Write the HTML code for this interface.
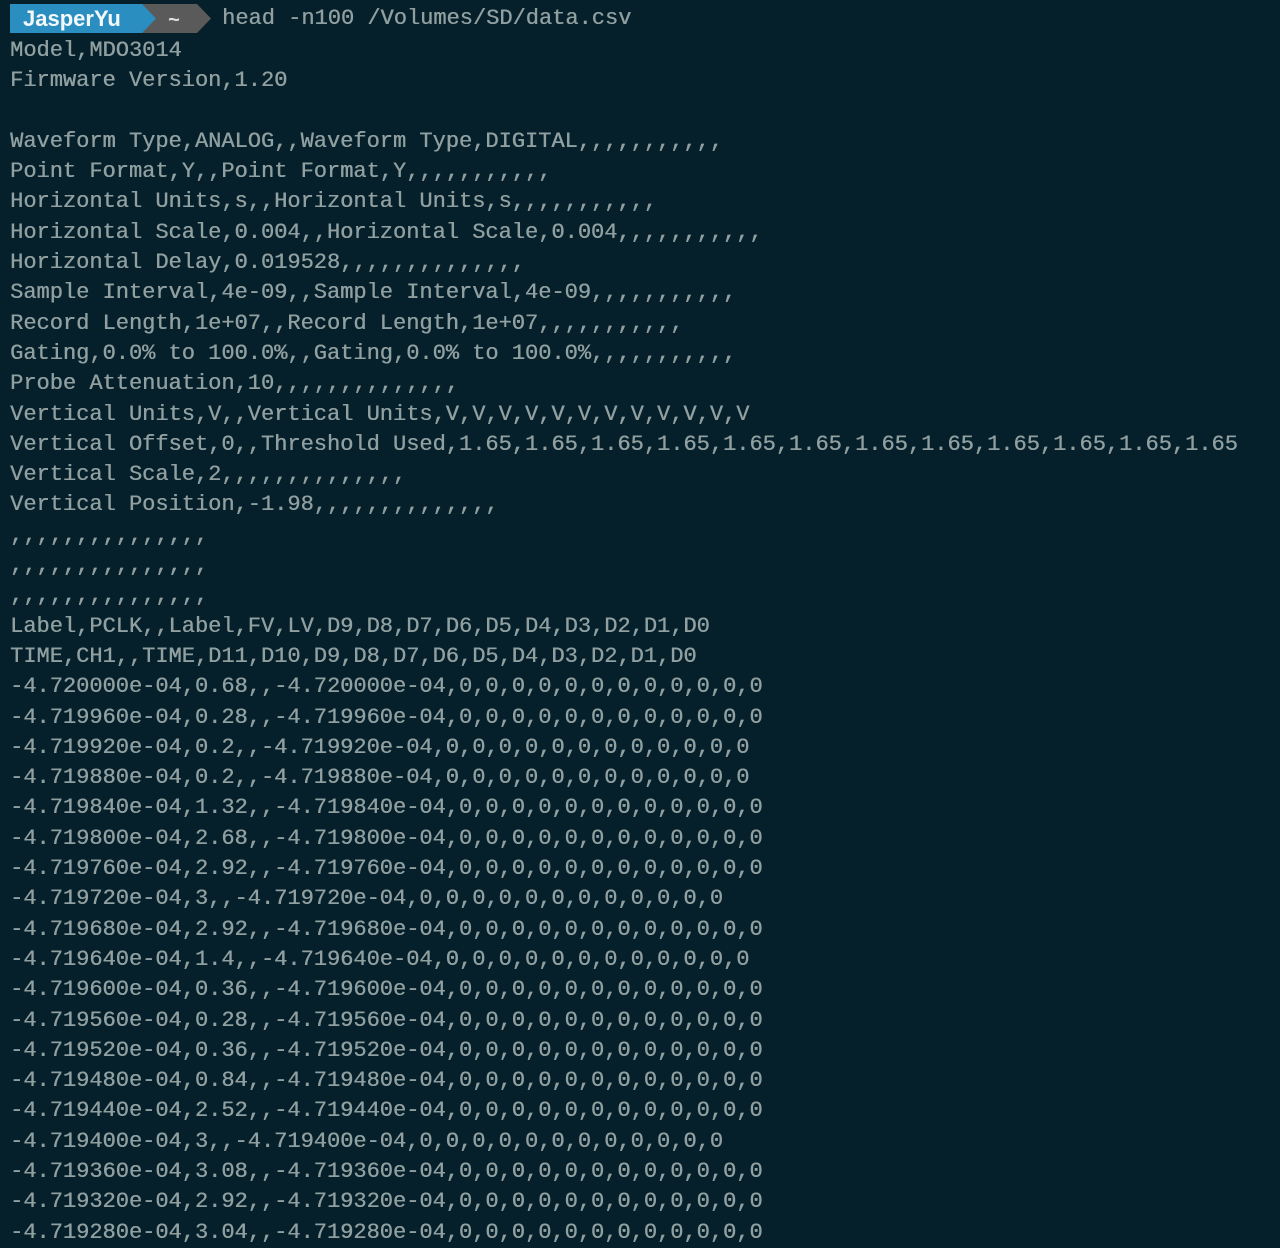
<!DOCTYPE html>
<html><head><style>
html,body{margin:0;padding:0;background:#05202a;width:1280px;height:1225px;overflow:hidden}
pre{margin:0;position:absolute;left:10px;top:36px;font-family:"Liberation Mono",monospace;font-size:22px;line-height:30.3px;color:#909fa0;text-shadow:0.4px 0 0 #909fa0}
</style></head><body>
<svg style="position:absolute;left:0;top:0" width="230" height="36">
<polygon points="142,4 197,4 211,18.5 197,33 142,33" fill="#5a5a5a"/>
<polygon points="10,4 142,4 156,18.5 142,33 10,33" fill="#2a8fc0"/>
<text x="23" y="26" font-family="Liberation Sans" font-weight="bold" font-size="22" fill="#f4f8fa">JasperYu</text>
<text x="168" y="26" font-family="Liberation Mono" font-weight="bold" font-size="20" fill="#ddd">~</text>
</svg>
<div style="position:absolute;left:222px;top:4px;font-family:'Liberation Mono',monospace;font-size:22px;line-height:30px;color:#909fa0;text-shadow:0.4px 0 0 #909fa0;white-space:pre">head -n100 /Volumes/SD/data.csv</div>
<pre>Model,MDO3014
Firmware Version,1.20

Waveform Type,ANALOG,,Waveform Type,DIGITAL,,,,,,,,,,,
Point Format,Y,,Point Format,Y,,,,,,,,,,,
Horizontal Units,s,,Horizontal Units,s,,,,,,,,,,,
Horizontal Scale,0.004,,Horizontal Scale,0.004,,,,,,,,,,,
Horizontal Delay,0.019528,,,,,,,,,,,,,,
Sample Interval,4e-09,,Sample Interval,4e-09,,,,,,,,,,,
Record Length,1e+07,,Record Length,1e+07,,,,,,,,,,,
Gating,0.0% to 100.0%,,Gating,0.0% to 100.0%,,,,,,,,,,,
Probe Attenuation,10,,,,,,,,,,,,,,
Vertical Units,V,,Vertical Units,V,V,V,V,V,V,V,V,V,V,V,V
Vertical Offset,0,,Threshold Used,1.65,1.65,1.65,1.65,1.65,1.65,1.65,1.65,1.65,1.65,1.65,1.65
Vertical Scale,2,,,,,,,,,,,,,,
Vertical Position,-1.98,,,,,,,,,,,,,,
,,,,,,,,,,,,,,,
,,,,,,,,,,,,,,,
,,,,,,,,,,,,,,,
Label,PCLK,,Label,FV,LV,D9,D8,D7,D6,D5,D4,D3,D2,D1,D0
TIME,CH1,,TIME,D11,D10,D9,D8,D7,D6,D5,D4,D3,D2,D1,D0
-4.720000e-04,0.68,,-4.720000e-04,0,0,0,0,0,0,0,0,0,0,0,0
-4.719960e-04,0.28,,-4.719960e-04,0,0,0,0,0,0,0,0,0,0,0,0
-4.719920e-04,0.2,,-4.719920e-04,0,0,0,0,0,0,0,0,0,0,0,0
-4.719880e-04,0.2,,-4.719880e-04,0,0,0,0,0,0,0,0,0,0,0,0
-4.719840e-04,1.32,,-4.719840e-04,0,0,0,0,0,0,0,0,0,0,0,0
-4.719800e-04,2.68,,-4.719800e-04,0,0,0,0,0,0,0,0,0,0,0,0
-4.719760e-04,2.92,,-4.719760e-04,0,0,0,0,0,0,0,0,0,0,0,0
-4.719720e-04,3,,-4.719720e-04,0,0,0,0,0,0,0,0,0,0,0,0
-4.719680e-04,2.92,,-4.719680e-04,0,0,0,0,0,0,0,0,0,0,0,0
-4.719640e-04,1.4,,-4.719640e-04,0,0,0,0,0,0,0,0,0,0,0,0
-4.719600e-04,0.36,,-4.719600e-04,0,0,0,0,0,0,0,0,0,0,0,0
-4.719560e-04,0.28,,-4.719560e-04,0,0,0,0,0,0,0,0,0,0,0,0
-4.719520e-04,0.36,,-4.719520e-04,0,0,0,0,0,0,0,0,0,0,0,0
-4.719480e-04,0.84,,-4.719480e-04,0,0,0,0,0,0,0,0,0,0,0,0
-4.719440e-04,2.52,,-4.719440e-04,0,0,0,0,0,0,0,0,0,0,0,0
-4.719400e-04,3,,-4.719400e-04,0,0,0,0,0,0,0,0,0,0,0,0
-4.719360e-04,3.08,,-4.719360e-04,0,0,0,0,0,0,0,0,0,0,0,0
-4.719320e-04,2.92,,-4.719320e-04,0,0,0,0,0,0,0,0,0,0,0,0
-4.719280e-04,3.04,,-4.719280e-04,0,0,0,0,0,0,0,0,0,0,0,0</pre>
</body></html>
